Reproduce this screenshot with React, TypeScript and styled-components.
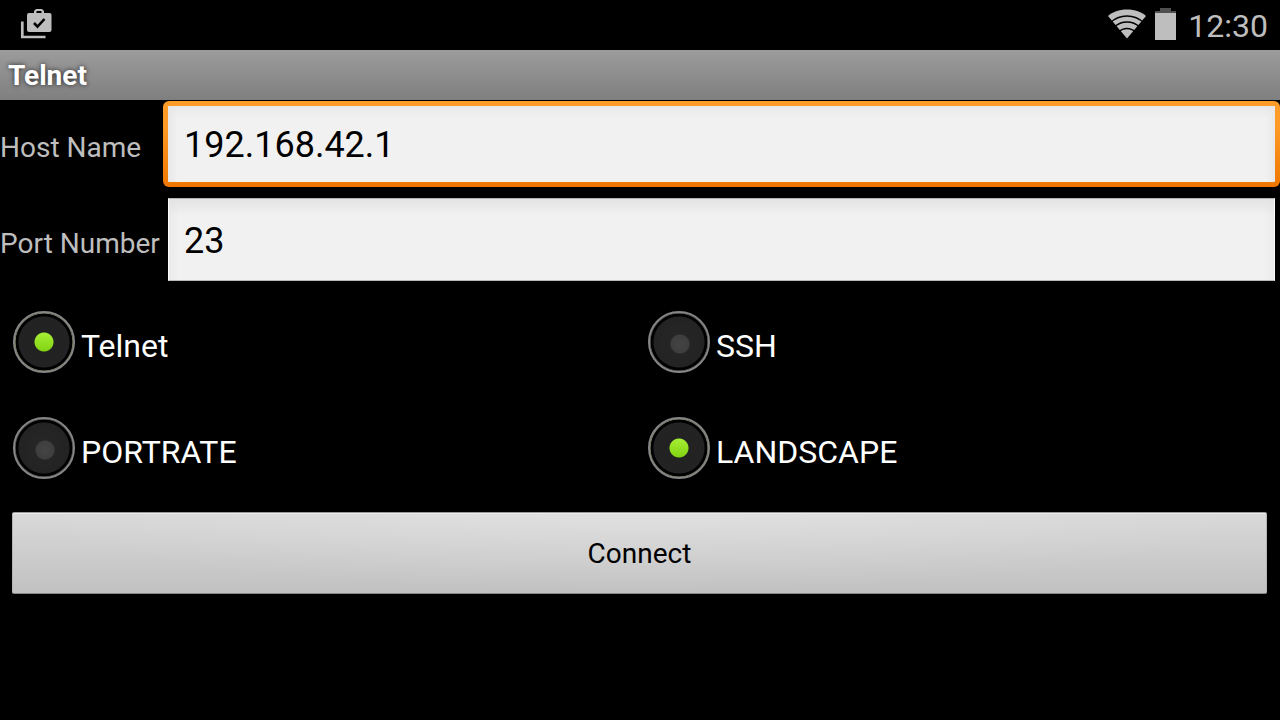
import React, { useState } from "react";
import styled, { createGlobalStyle, css } from "styled-components";

const GlobalStyle = createGlobalStyle`
  * { box-sizing: border-box; }
  body {
    margin: 0;
    background: #000;
    color: #fff;
    font-family: Roboto, "Noto Sans", sans-serif;
  }
`;

const StatusBar = styled.header`
  display: flex;
  align-items: center;
  justify-content: space-between;
  height: 50px;
  padding: 0 12px 2px 20px;
  color: #bebebe;
`;

const StatusIcons = styled.div`
  display: flex;
  align-items: center;
  gap: 8px;
`;

const Clock = styled.time`
  margin-left: 4px;
  padding-top: 4px;
  font-size: 32px;
  line-height: 40px;
`;

const TitleBar = styled.h1`
  margin: 0;
  padding: 0 8px;
  height: 50px;
  font-size: 28px;
  line-height: 52px;
  font-weight: 700;
  text-shadow: 0 0 5px rgba(0, 0, 0, 0.75);
  background: linear-gradient(#9c9c9c, #7f7f7f);
`;

const FieldRow = styled.div`
  display: grid;
  grid-template-columns: 163px 1fr;
  align-items: baseline;
  height: 96px;
`;

const FieldLabel = styled.label`
  font-size: 28px;
  line-height: 32px;
  color: #bebebe;
  white-space: nowrap;
`;

const TextField = styled.input<{ $highlighted?: boolean }>`
  min-width: 0;
  font: 400 36px/44px Roboto, "Noto Sans", sans-serif;
  color: #000;
  outline: none;
  ${({ $highlighted }) =>
    $highlighted
      ? css`
          margin: 1px 0 0;
          height: 86px;
          padding: 2px 16px 0;
          border: 5px solid transparent;
          border-radius: 6px;
          background:
            linear-gradient(#e8e8e8, rgba(241, 241, 241, 0) 12px) padding-box,
            linear-gradient(90deg, #e8e8e8, #f1f1f1 10px, #f1f1f1 calc(100% - 10px), #e8e8e8) padding-box,
            linear-gradient(#ff9c28, #ff9a26 30%, #ee7600) border-box;
        `
      : css`
          margin: 2px 5px 0;
          height: 83px;
          padding: 2px 15px 0;
          border: 1px solid #fafafa;
          border-top-color: #b4b0b4;
          border-bottom-color: #b8b8b8;
          background:
            linear-gradient(#e4e2e4, rgba(241, 241, 241, 0) 16px),
            linear-gradient(90deg, #eaeaea, #f1f1f1 10px, #f1f1f1 calc(100% - 10px), #eaeaea);
        `}
`;

const Choices = styled.fieldset`
  display: grid;
  grid-template-columns: 1fr 1fr;
  height: 106px;
  min-width: 0;
  margin: 0;
  padding: 19px 10px 0 0;
  border: 0;
`;

const Choice = styled.label`
  display: flex;
  align-items: flex-start;
  gap: 6px;
  padding-left: 13px;
  font-size: 32px;
  line-height: 70px;
`;

const Radio = styled.input`
  appearance: none;
  flex: none;
  width: 62px;
  height: 62px;
  margin: 0;
  border: 2px solid #868686;
  border-radius: 50%;
  background:
    radial-gradient(circle at 32px 33px, #444 0, #3e3e3e 9px, transparent 10px),
    radial-gradient(circle at 31px 31px, #272727 0, #232323 25px, #000 26px, #000 28px, #868686 29px);
  background-origin: border-box;
  background-clip: padding-box;

  &:checked {
    background:
      radial-gradient(circle at 31px 31px, transparent 9px, #222 10px, #232323 25px, #000 26px, #000 28px, #868686 29px),
      linear-gradient(#a6ee34 22px, #80d211 41px);
    background-origin: border-box;
    background-clip: padding-box;
  }
`;

const ConnectButton = styled.button`
  display: block;
  width: calc(100% - 25px);
  height: 82px;
  margin: 8px 13px 0 12px;
  padding: 2px 0 0;
  border: 1px solid #b5b5b5;
  border-top-color: #999;
  border-bottom-color: #888;
  border-radius: 2px;
  box-shadow: inset 0 1px #ececec;
  font: 400 28px/78px Roboto, "Noto Sans", sans-serif;
  color: #000;
  background:
    radial-gradient(ellipse at 50% 0, rgba(255, 255, 255, 0.2), transparent 70%),
    linear-gradient(#d9d9d9, #c1c1c1);
`;

const UpdateIcon = () => (
  <svg width="32" height="32" viewBox="0 0 32 32" fill="none" aria-hidden="true">
    <path d="M2.300 13.500V29H25.500" stroke="currentColor" strokeWidth="2.700" />
    <path
      fill="currentColor"
      fillRule="evenodd"
      d="M9 5h5V3l2-2h6l2 2v2h5.500a2 2 0 0 1 2 2v15a2 2 0 0 1-2 2H9a2 2 0 0 1-2-2V7a2 2 0 0 1 2-2Zm7.500 0h5V3h-5Z"
    />
    <path d="M14 15l3.500 3.700 7-7.700" stroke="#000" strokeWidth="2.600" />
  </svg>
);

const WifiIcon = () => (
  <svg width="40" height="32" viewBox="0 0 40 32" aria-hidden="true">
    <path d="M20 30.500 1 8C5.500 4 12 1.500 20 1.500S34.500 4 39 8Z" fill="currentColor" />
    <g fill="none" stroke="#000" strokeWidth="1.400">
      <path d="M3 15A24 24 0 0 1 37 15" />
      <path d="M7.300 19.300A18 18 0 0 1 32.700 19.300" />
      <path d="M11.900 23.900A11.500 11.500 0 0 1 28.100 23.900" />
    </g>
  </svg>
);

const BatteryIcon = () => (
  <svg width="21" height="32" viewBox="0 0 21 32" aria-hidden="true">
    <path d="M0 5V3h5V0h11v3h5v2Z" fill="#505050" />
    <path d="M0 5h21v27H0Z" fill="currentColor" />
  </svg>
);

type OptionProps = {
  name: string;
  options: string[];
  value: string;
  onChange: (value: string) => void;
};

const OptionRow = ({ name, options, value, onChange }: OptionProps) => (
  <Choices aria-label={name}>
    {options.map((option) => (
      <Choice key={option}>
        <Radio
          type="radio"
          name={name}
          value={option}
          checked={value === option}
          onChange={() => onChange(option)}
        />
        {option}
      </Choice>
    ))}
  </Choices>
);

export default function App() {
  const [protocol, setProtocol] = useState("Telnet");
  const [orientation, setOrientation] = useState("LANDSCAPE");

  return (
    <>
      <GlobalStyle />
      <StatusBar>
        <UpdateIcon />
        <StatusIcons>
          <WifiIcon />
          <BatteryIcon />
          <Clock>12:30</Clock>
        </StatusIcons>
      </StatusBar>
      <TitleBar>Telnet</TitleBar>
      <form onSubmit={(event) => event.preventDefault()}>
        <FieldRow>
          <FieldLabel htmlFor="host">Host Name</FieldLabel>
          <TextField id="host" type="text" defaultValue="192.168.42.1" $highlighted />
        </FieldRow>
        <FieldRow>
          <FieldLabel htmlFor="port">Port Number</FieldLabel>
          <TextField id="port" type="text" inputMode="numeric" defaultValue="23" />
        </FieldRow>
        <OptionRow name="protocol" options={["Telnet", "SSH"]} value={protocol} onChange={setProtocol} />
        <OptionRow
          name="orientation"
          options={["PORTRATE", "LANDSCAPE"]}
          value={orientation}
          onChange={setOrientation}
        />
        <ConnectButton type="submit">Connect</ConnectButton>
      </form>
    </>
  );
}
